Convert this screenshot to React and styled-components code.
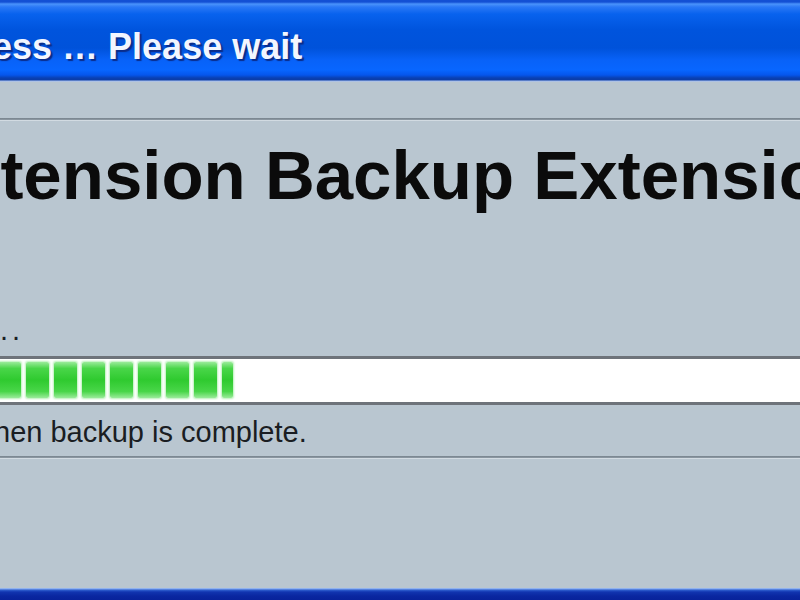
import React from "react";
import styled, { createGlobalStyle } from "styled-components";

// XP style "please wait" dialog, cropped
const GlobalStyle = createGlobalStyle`
  html, body {
    margin: 0;
    padding: 0;
    height: 600px;
    overflow: hidden;
    background: #b9c6d0;
  }
`;

const Window = styled.div`
  width: 800px;
  height: 600px;
  display: flex;
  flex-direction: column;
  overflow: hidden;
  background: #b9c6d0;
  font-family: "Liberation Sans", Arial, sans-serif;
`;

const TitleBar = styled.div`
  height: 82px;
  box-sizing: border-box;
  padding-top: 27px;
  flex-shrink: 0;
  overflow: hidden;
  white-space: nowrap;
  background: linear-gradient(
    to bottom,
    #1350d4 0px,
    #1350d4 2px,
    #4a93fb 4px,
    #2a78f6 7px,
    #0862ee 14px,
    #0054dd 30px,
    #0052da 48px,
    #0862f8 60px,
    #0866ff 70px,
    #0556ec 75px,
    #0a40b2 78px,
    #0a3ca8 80px,
    #a9bfe6 81px,
    #b4c6e2 82px
  );
`;

const Title = styled.div`
  margin-left: -8px;
  font-size: 36px;
  line-height: 40px;
  font-weight: bold;
  color: #f2f6ff;
  text-shadow: 2px 2px 1px #0a2c8a;
`;

const Body = styled.div`
  flex: 1;
  display: flex;
  flex-direction: column;
  overflow: hidden;
`;

const Separator = styled.div`
  height: 2px;
  flex-shrink: 0;
  margin-top: ${(p) => p.$top}px;
  background: linear-gradient(to bottom, #76828c, #909ca6);
  box-shadow: 0 1px 0 #d2dbe2;
`;

const Heading = styled.h1`
  margin: 16px 0 0 -84px;
  font-size: 69px;
  line-height: 80px;
  font-weight: bold;
  color: #0b0b0b;
  white-space: nowrap;
`;

const Line = styled.div`
  margin: ${(p) => p.$top}px 0 0 ${(p) => p.$indent}px;
  font-size: 29px;
  line-height: 34px;
  color: #1a1d22;
  white-space: nowrap;
  letter-spacing: ${(p) => p.$spacing || 0}px;
`;

const ProgressTrack = styled.div`
  margin-top: 9px;
  height: 43px;
  flex-shrink: 0;
  display: flex;
  gap: 5px;
  padding: 4px 0 3px;
  box-sizing: border-box;
  background: #ffffff;
  border-top: 3px solid #6e737a;
  border-bottom: 3px solid #6e737a;
  box-sizing: content-box;
  height: 36px;
  padding: 3px 0 4px;
  margin-left: -2px;
`;

const Block = styled.div`
  flex-shrink: 0;
  height: 100%;
  border-radius: 2px;
  background: linear-gradient(
    to bottom,
    #9aeb9a 0%,
    #49d649 18%,
    #2fca2f 50%,
    #49d649 82%,
    #9aeb9a 100%
  );
  box-shadow: 0 0 2px 1px #b8f2b8;
`;

const blocks = [23, 23, 23, 23, 23, 23, 23, 23, 11];

export default function App() {
  return (
    <Window>
      <GlobalStyle />
      <TitleBar>
        <Title>ess … Please wait</Title>
      </TitleBar>
      <Body>
        <Separator $top={36} />
        <Heading>Extension Backup Extension</Heading>
        <Line $top={97} $indent={-12} $spacing={4}>
          ...
        </Line>
        <ProgressTrack>
          {blocks.map((w, i) => (
            <Block key={i} style={{ width: w }} />
          ))}
        </ProgressTrack>
        <Line $top={10} $indent={-6}>
          hen backup is complete.
        </Line>
        <Separator $top={7} />
      </Body>
      <BottomFrame />
    </Window>
  );
}

const BottomFrame = styled.div`
  height: 12px;
  flex-shrink: 0;
  background: linear-gradient(
    to bottom,
    #a6c2f2 0px,
    #7aa2ea 1px,
    #2f5fd0 2px,
    #1134b0 4px,
    #0a26a0 8px,
    #08229a 12px
  );
`;
